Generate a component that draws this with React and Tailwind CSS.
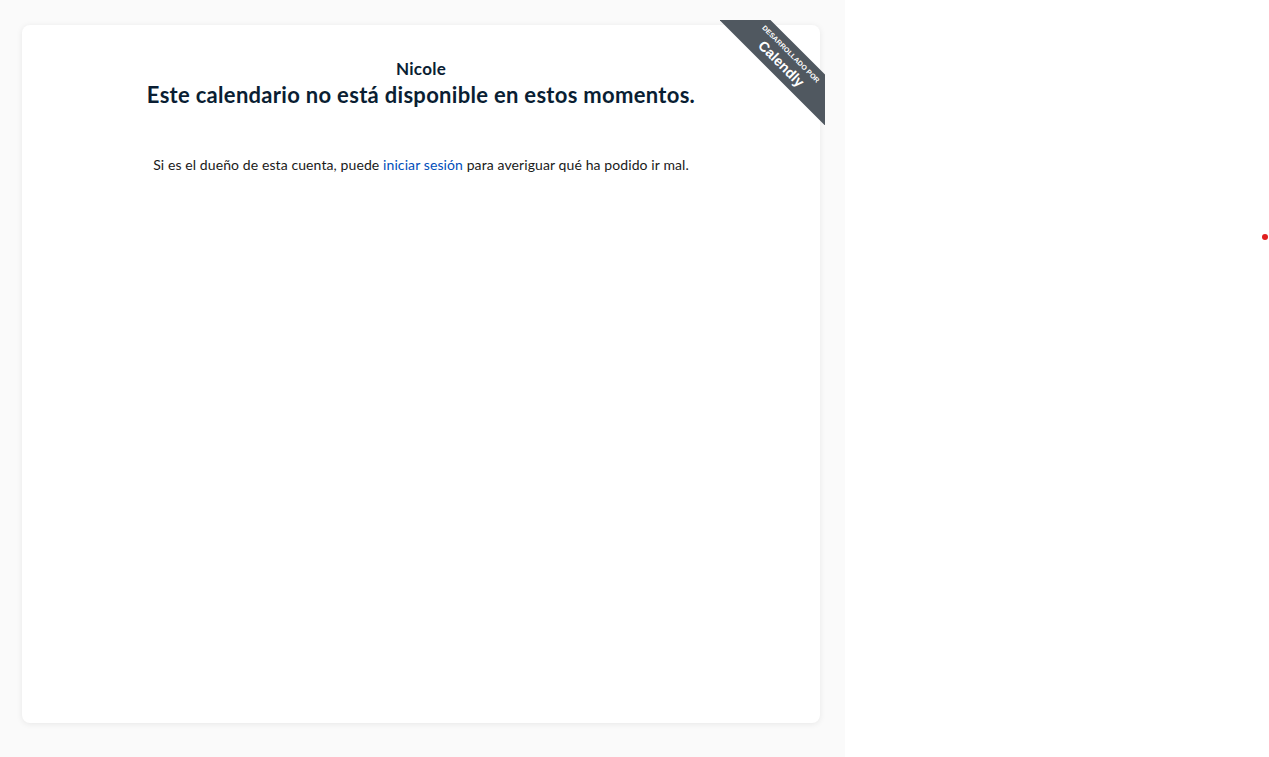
export default function App() {
  return (
    <div className="relative flex h-[757px] w-full bg-white font-['Lato',sans-serif]">
      <div className="h-full w-[845px] bg-[#fafafa] pl-[22px] pt-[25px]">
        <div className="relative h-[698px] w-[798px] rounded-lg bg-white shadow-[0_1px_6px_rgba(0,0,0,0.08)]">
          <CalendlyRibbon />
          <div className="flex flex-col items-center pt-[34px] text-center">
            <h2 className="text-[17px] font-bold leading-[20px] tracking-[0.3px] text-[#0a1e33]">Nicole</h2>
            <h1 className="mt-[3px] text-[22px] font-bold leading-[26px] tracking-[0.3px] text-[#0a1e33]">
              Este calendario no está disponible en estos momentos.
            </h1>
            <p className="mt-[47px] text-[14px] leading-[20px] tracking-[0.1px] text-[#1a1a1a]">
              Si es el dueño de esta cuenta, puede{' '}
              <a href="#" className="text-[#004eba]">
                iniciar sesión
              </a>{' '}
              para averiguar qué ha podido ir mal.
            </p>
          </div>
        </div>
      </div>
      {/* stray red dot at the right edge */}
      <span className="absolute left-[1262px] top-[234px] h-[6px] w-[6px] rounded-full bg-[#e01e1e]" />
    </div>
  )
}

function CalendlyRibbon() {
  return (
    <div className="absolute -right-[5px] -top-[5px] h-[105px] w-[105px] overflow-hidden">
      <div className="absolute left-[-10px] top-[22px] flex h-[36px] w-[150px] rotate-45 flex-col items-center justify-center bg-[#505860] font-['Liberation_Sans',sans-serif] font-bold text-white">
        <span className="text-[7px] leading-[7px] tracking-[0.1px]">DESARROLLADO POR</span>
        <span className="mt-[3px] text-[14px] leading-[14px]">Calendly</span>
      </div>
    </div>
  )
}
